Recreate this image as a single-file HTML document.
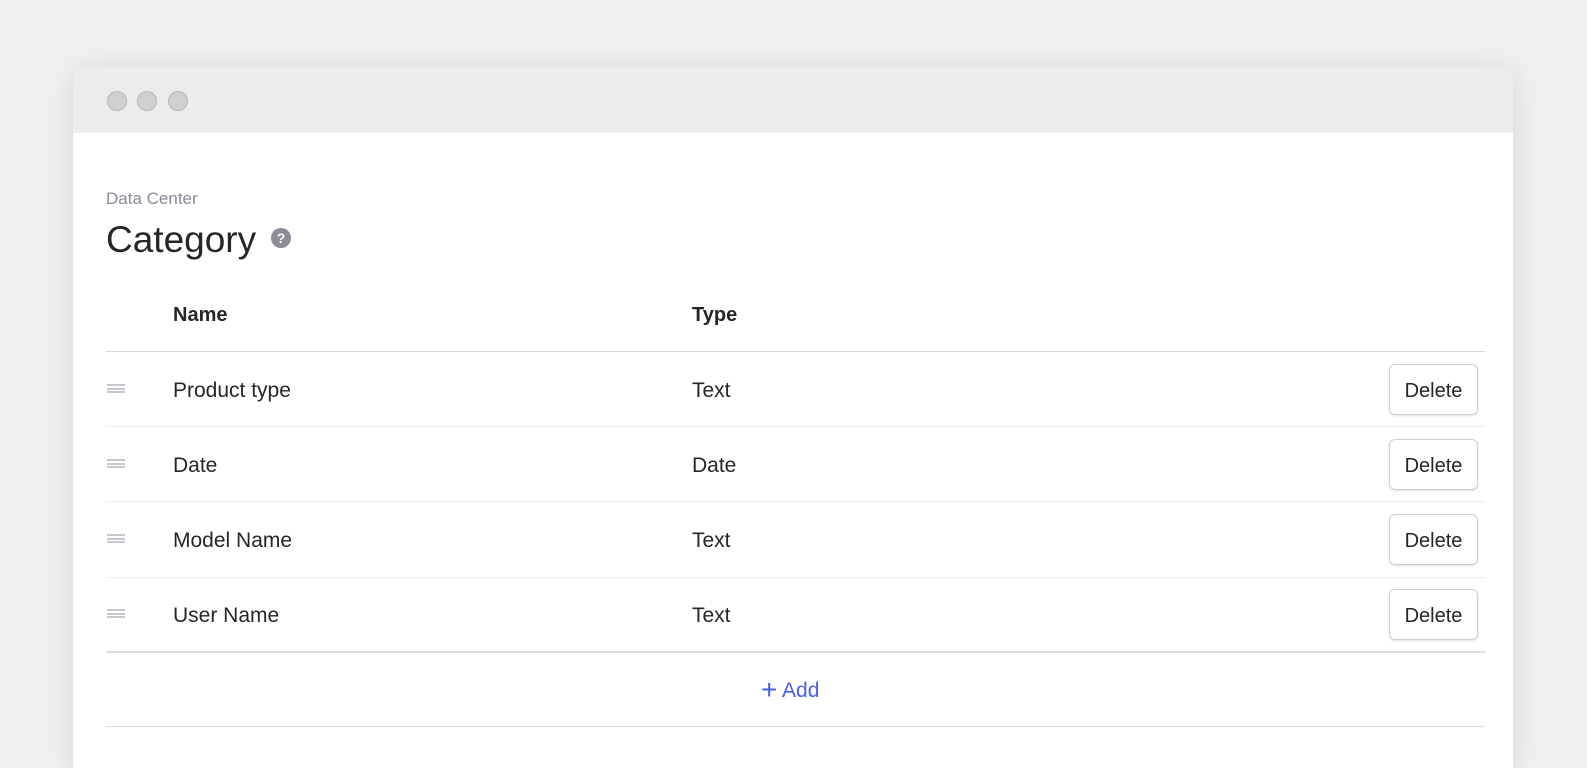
<!DOCTYPE html>
<html><head><style>
*{margin:0;padding:0;box-sizing:border-box}
html,body{width:1587px;height:768px;overflow:hidden}
body{background:#f0f0f2;font-family:"Liberation Sans",sans-serif;position:relative}
.win{position:absolute;left:73px;top:67px;width:1440px;height:701px;background:#fff;border-radius:12px 12px 0 0;box-shadow:0 4px 30px rgba(0,0,0,.12);overflow:hidden}
.bar{height:66px;background:#ececec;position:relative}
.dot{position:absolute;top:24px;width:20px;height:20px;border-radius:50%;background:#d2cfcf;border:1px solid #b9b6b6}
.t{position:absolute;color:#26262a;line-height:1}
.r{font-size:21px}
.line{position:absolute;left:33px;width:1379px;height:1px;background:#ececee}
.btn{position:absolute;left:1316px;width:89px;height:51px;border:1px solid #cfced4;border-radius:6px;box-shadow:0 1px 2px rgba(0,0,0,.12);font-size:20px;color:#26262a;display:flex;align-items:center;justify-content:center;padding-top:3px}
.hd{position:absolute;left:34px;width:18px;height:9px;border-top:2px solid #c6c6cc;border-bottom:2px solid #c6c6cc}
.hd:after{content:"";position:absolute;left:0;right:0;top:1.5px;height:2px;background:#c6c6cc}
</style></head><body>
<div class="win">
<div class="bar"><div class="dot" style="left:34px"></div><div class="dot" style="left:64px"></div><div class="dot" style="left:95px"></div></div>
<div class="t" style="left:33px;top:123px;font-size:17px;color:#8a8a99">Data Center</div>
<div class="t" style="left:33px;top:154px;font-size:37px">Category</div>
<div style="position:absolute;left:198px;top:161px;width:20px;height:20px;border-radius:50%;background:#8b8b99;color:#fff;font-size:14px;font-weight:bold;text-align:center;line-height:20px">?</div>
<div class="t" style="left:100px;top:238px;font-size:20px;font-weight:bold">Name</div>
<div class="t" style="left:619px;top:238px;font-size:20px;font-weight:bold">Type</div>
<div class="line" style="top:284px;background:#d8d8dc"></div>

<div class="hd" style="top:317px"></div>
<div class="t r" style="left:100px;top:313px">Product type</div>
<div class="t r" style="left:619px;top:313px">Text</div>
<div class="btn" style="top:297px">Delete</div>
<div class="line" style="top:359px"></div>

<div class="hd" style="top:392px"></div>
<div class="t r" style="left:100px;top:388px">Date</div>
<div class="t r" style="left:619px;top:388px">Date</div>
<div class="btn" style="top:372px">Delete</div>
<div class="line" style="top:434px"></div>

<div class="hd" style="top:467px"></div>
<div class="t r" style="left:100px;top:463px">Model Name</div>
<div class="t r" style="left:619px;top:463px">Text</div>
<div class="btn" style="top:447px">Delete</div>
<div class="line" style="top:510px"></div>

<div class="hd" style="top:542px"></div>
<div class="t r" style="left:100px;top:538px">User Name</div>
<div class="t r" style="left:619px;top:538px">Text</div>
<div class="btn" style="top:522px">Delete</div>
<div class="line" style="top:584px;height:2px;background:#e0e0e4"></div>

<div class="t" style="left:688px;top:607px;font-size:21px;color:#4a5cf5"><span style="font-size:28px;font-weight:300;position:relative;top:2px">+</span> Add</div>
<div class="line" style="top:659px;background:#dcdce0"></div>
</div>
</body></html>
